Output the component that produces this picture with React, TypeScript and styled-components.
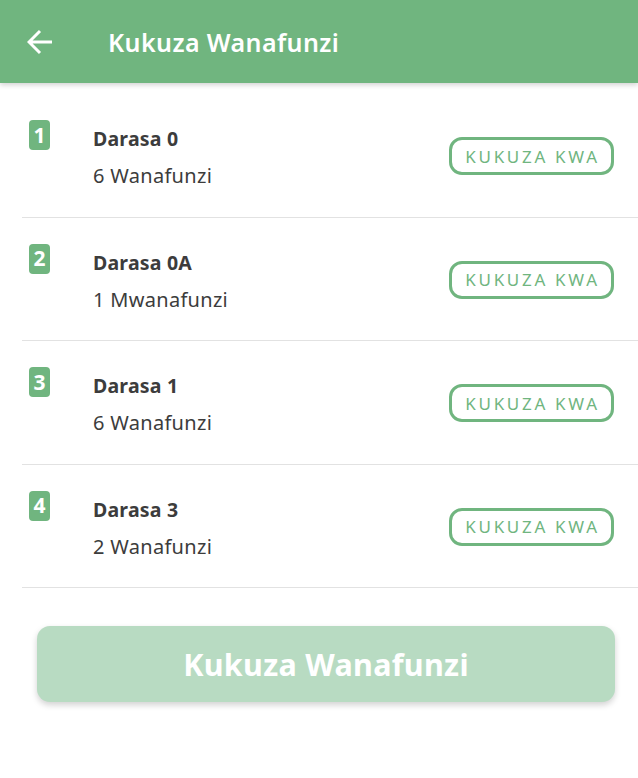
import React from "react";
import styled, { createGlobalStyle } from "styled-components";

const Global = createGlobalStyle`
  html, body { margin: 0; padding: 0; background: #fff; }
  body { font-family: "Noto Sans", "Open Sans", sans-serif; }
  * { box-sizing: border-box; }
`;

const Page = styled.div`
  width: 638px;
  min-height: 778px;
  background: #fff;
  display: flex;
  flex-direction: column;
`;

const Header = styled.header`
  height: 83px;
  background: #70b57f;
  display: flex;
  align-items: center;
  padding-left: 27px;
  box-shadow: 0 2px 5px rgba(0, 0, 0, 0.18);
  position: relative;
  z-index: 1;
`;

const BackButton = styled.button`
  width: 26px;
  height: 26px;
  padding: 0;
  border: 0;
  background: transparent;
  display: flex;
  align-items: center;
  justify-content: center;
  margin-right: 55px;
`;

const Title = styled.h1`
  margin: 0;
  color: #fff;
  font-size: 25px;
  font-weight: 600;
  letter-spacing: 0.4px;
`;

const List = styled.ul`
  list-style: none;
  margin: 0;
  padding: 11px 0 0 22px;
`;

const Row = styled.li`
  height: 123.5px;
  border-bottom: 1.5px solid #e2e2e2;
  display: flex;
  align-items: flex-start;
  padding-top: 26px;
  padding-right: 24px;
`;

const Badge = styled.span`
  width: 21px;
  height: 30px;
  border-radius: 4px;
  background: #70b57f;
  color: #fff;
  font-size: 21px;
  font-weight: 700;
  line-height: 1;
  display: flex;
  align-items: center;
  justify-content: center;
  margin-left: 7px;
`;

const Info = styled.div`
  flex: 1;
  display: flex;
  flex-direction: column;
  margin-left: 43px;
  margin-top: 7px;
  gap: 13px;
`;

const Name = styled.div`
  font-size: 19.5px;
  font-weight: 700;
  color: #3c3c3c;
  line-height: 24px;
  letter-spacing: 0.2px;
`;

const Count = styled.div`
  font-size: 20px;
  color: #3c3c3c;
  line-height: 24px;
  letter-spacing: 0.3px;
`;

const PromoteButton = styled.button`
  width: 165px;
  height: 38px;
  margin-top: 17px;
  border: 3px solid #70b57f;
  border-radius: 13px;
  background: #fff;
  color: #70b57f;
  font-family: "Noto Sans", sans-serif;
  font-size: 17px;
  letter-spacing: 2.7px;
  display: flex;
  align-items: center;
  justify-content: center;
  padding: 0 0 0 2px;
`;

const Footer = styled.div`
  padding: 38px 23px 0 37px;
`;

const SubmitButton = styled.button`
  width: 578px;
  height: 76px;
  border: 0;
  border-radius: 13px;
  background: #b8dbc2;
  color: #fff;
  font-family: "Noto Sans", sans-serif;
  font-size: 30.5px;
  font-weight: 700;
  letter-spacing: 0.3px;
  box-shadow: 0 3px 6px rgba(0, 0, 0, 0.18);
`;

const classes = [
  { n: 1, name: "Darasa 0", count: "6 Wanafunzi" },
  { n: 2, name: "Darasa 0A", count: "1 Mwanafunzi" },
  { n: 3, name: "Darasa 1", count: "6 Wanafunzi" },
  { n: 4, name: "Darasa 3", count: "2 Wanafunzi" },
];

export default function App() {
  return (
    <Page>
      <Global />
      <Header>
        <BackButton aria-label="back">
          <svg width="26" height="26" viewBox="0 0 26 26" fill="none">
            <path d="M25 13H3M13 2L2 13l11 11" stroke="#fff" strokeWidth="3" />
          </svg>
        </BackButton>
        <Title>Kukuza Wanafunzi</Title>
      </Header>
      <List>
        {classes.map((c) => (
          <Row key={c.n}>
            <Badge>{c.n}</Badge>
            <Info>
              <Name>{c.name}</Name>
              <Count>{c.count}</Count>
            </Info>
            <PromoteButton>KUKUZA KWA</PromoteButton>
          </Row>
        ))}
      </List>
      <Footer>
        <SubmitButton>Kukuza Wanafunzi</SubmitButton>
      </Footer>
    </Page>
  );
}
